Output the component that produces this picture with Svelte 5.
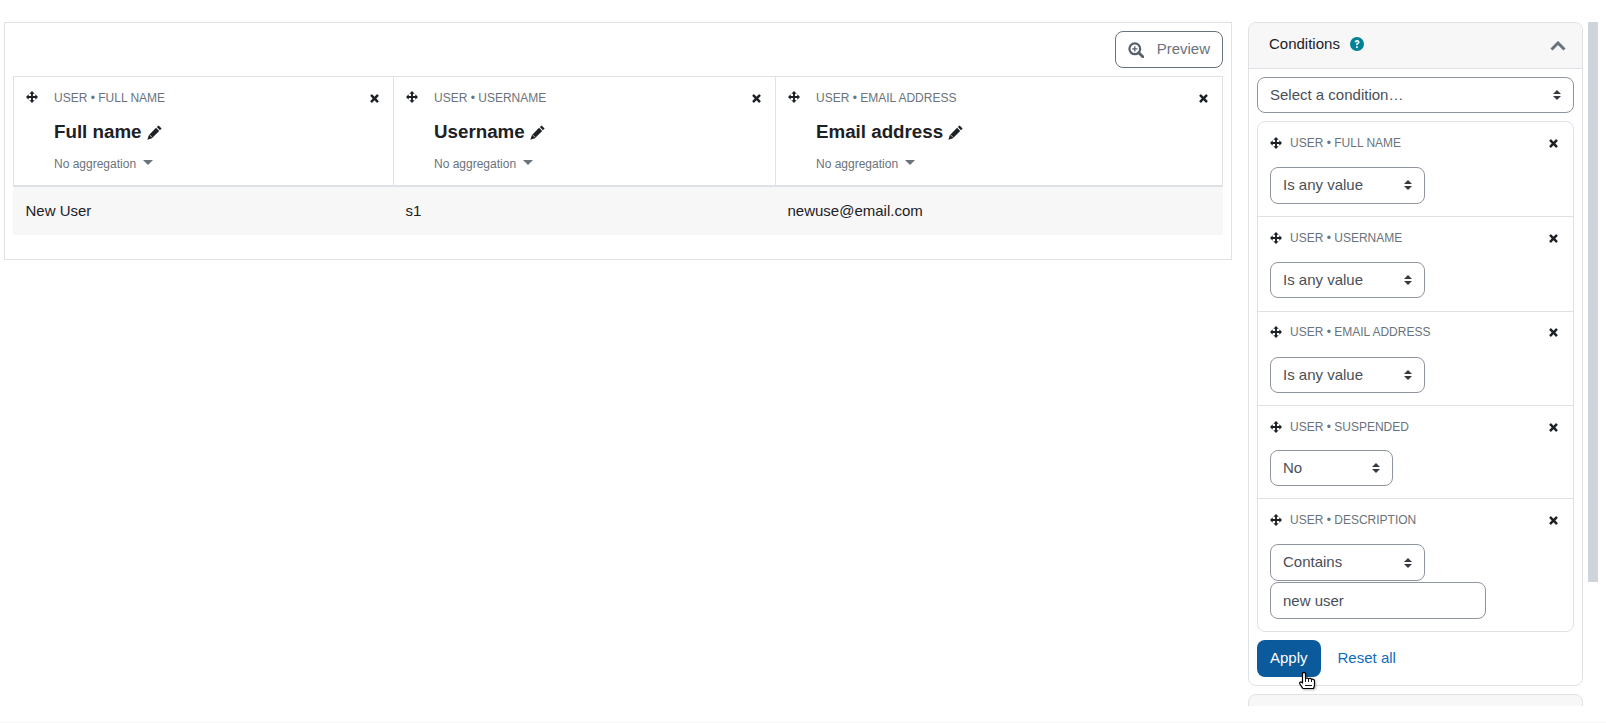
<script>
    const columns = [
        { label: "USER • FULL NAME", title: "Full name", value: "New User" },
        { label: "USER • USERNAME", title: "Username", value: "s1" },
        { label: "USER • EMAIL ADDRESS", title: "Email address", value: "newuse@email.com" }
    ];

    const conditions = [
        { label: "USER • FULL NAME", op: "Is any value" },
        { label: "USER • USERNAME", op: "Is any value" },
        { label: "USER • EMAIL ADDRESS", op: "Is any value" },
        { label: "USER • SUSPENDED", op: "No", short: true },
        { label: "USER • DESCRIPTION", op: "Contains", text: "new user" }
    ];
</script>

{#snippet move()}
    <svg class="move" viewBox="0 0 24 24" aria-hidden="true">
        <path d="M12 0l5.400 5.400h-3.500v4.700h4.700V6.600L24 12l-5.400 5.400v-3.500h-4.700v4.700h3.500L12 24l-5.400-5.400h3.500v-4.700H5.400v3.500L0 12l5.400-5.400v3.500h4.700V5.400H6.600z" />
    </svg>
{/snippet}

{#snippet close()}
    <svg class="close" viewBox="0 0 10 10" aria-hidden="true">
        <path d="M2.600.6L5 3l2.400-2.400a.8.8 0 0 1 1.100 0l.9.9a.8.8 0 0 1 0 1.100L7 5l2.400 2.400a.8.8 0 0 1 0 1.100l-.9.9a.8.8 0 0 1-1.100 0L5 7 2.600 9.400a.8.8 0 0 1-1.100 0l-.9-.9a.8.8 0 0 1 0-1.100L3 5 .6 2.600a.8.8 0 0 1 0-1.100l.9-.9a.8.8 0 0 1 1.100 0z" />
    </svg>
{/snippet}

<div class="page">
    <main class="card">
        <div class="toolbar">
            <button class="preview">
                <svg viewBox="0 0 16 16" aria-hidden="true">
                    <circle cx="6.800" cy="6.800" r="5.400" fill="none" stroke="#56606b" stroke-width="2.200" />
                    <path d="M10.800 10.800l4 4" stroke="#56606b" stroke-width="2.800" stroke-linecap="round" />
                    <path d="M6.800 4.200v5.200M4.200 6.800h5.200" stroke="#56606b" stroke-width="1.300" />
                </svg>
                <span>Preview</span>
            </button>
        </div>
        <div class="table">
            {#each columns as col}
                <div class="th">
                    {@render move()}
                    <div class="th-body">
                        <div class="th-top">
                            <span class="label">{col.label}</span>
                            {@render close()}
                        </div>
                        <h5>
                            {col.title}
                            <svg class="pencil" viewBox="0 0 16 16" aria-hidden="true">
                                <path d="M12.300.4l3.300 3.300-1.800 1.800-3.300-3.300zM9.700 3l3.300 3.300-7.800 7.800L.4 15.600l1.500-4.800z" />
                                <path d="M2.800 10.600l2.600 2.600" fill="none" stroke="#fff" stroke-width=".8" />
                            </svg>
                        </h5>
                        <div class="agg">No aggregation <i class="caret"></i></div>
                    </div>
                </div>
            {/each}
            {#each columns as col}
                <div class="td">{col.value}</div>
            {/each}
        </div>
    </main>

    <aside class="side">
        <section class="panel">
            <header>
                <span>Conditions</span>
                <svg class="help" viewBox="0 0 14 14" aria-hidden="true">
                    <circle cx="7" cy="7" r="7" fill="#008196" />
                    <path d="M4.600 5.300c.1-1.400 1.100-2.200 2.500-2.200s2.400.8 2.400 2c0 1-.6 1.400-1.200 1.800-.5.3-.7.5-.7 1v.3H6.100v-.5c0-.9.4-1.300 1-1.700.4-.3.7-.5.7-.8 0-.4-.3-.6-.7-.6-.5 0-.8.3-.9.8zM6.100 9.200h1.600v1.700H6.100z" fill="#fff" />
                </svg>
                <svg class="chevron" viewBox="0 0 16 10" aria-hidden="true">
                    <path d="M1.500 8.500L8 2l6.500 6.500" fill="none" stroke="#6a737b" stroke-width="3" />
                </svg>
            </header>
            <div class="panel-body">
                <select class="field wide">
                    <option>Select a condition…</option>
                </select>
                <div class="list">
                    {#each conditions as c}
                        <div class="cond">
                            <div class="cond-top" class:tight={c.short}>
                                {@render move()}
                                <span class="label">{c.label}</span>
                                {@render close()}
                            </div>
                            <select class="field" class:short={c.short}>
                                <option>{c.op}</option>
                            </select>
                            {#if c.text}
                                <input class="field text" value={c.text} />
                            {/if}
                        </div>
                    {/each}
                </div>
                <div class="actions">
                    <button class="apply">Apply</button>
                    <a href="#reset">Reset all</a>
                    <svg class="cursor" viewBox="0 0 16 17" aria-hidden="true">
                        <path d="M3.500 1.500C3.500.2 6.500.2 6.500 1.500V6.500C8 6 9 6 9.500 6.800 11 6.200 12 6.500 12.500 7.300 14 7 15.500 7.500 15.500 9V13C15.500 14.500 15 15 14.500 16.500H4C3 15 1.500 13 .7 11.500.2 10.300 1.500 9.500 2.500 10.200L3.500 11z" fill="#fff" stroke="#000" stroke-width="1.200" stroke-linejoin="round" />
                        <path d="M6.500 6.500V10M9.500 7V10M12.500 7.500V10M6 13.500h7" stroke="#000" stroke-width=".9" fill="none" />
                    </svg>
                </div>
            </div>
        </section>
        <section class="panel next"></section>
    </aside>

    <div class="scrollbar"></div>
</div>

<style>
    :global(body) {
        background: #fff;
        font-family: "Liberation Sans", Arial, sans-serif;
        font-size: 15px;
        line-height: 1.5;
        color: #1d2125;
    }
    .page {
        display: flex;
        align-items: flex-start;
        height: 723px;
        padding: 22.3px 0 0 4px;
        box-sizing: border-box;
        border-bottom: 1px solid #f7f7f7;
        overflow: hidden;
    }
    .card {
        width: 1228px;
        height: 238px;
        box-sizing: border-box;
        border: 1px solid #dee2e6;
        padding: 8px;
        flex: none;
    }
    .toolbar {
        display: flex;
        justify-content: flex-end;
        margin-bottom: 8px;
    }
    .preview {
        display: flex;
        align-items: center;
        gap: 13px;
        height: 36.5px;
        padding: 0 12px;
        font: inherit;
        color: #6a737b;
        background: #fff;
        border: 1px solid #6a737b;
        border-radius: 8px;
    }
    .preview svg {
        width: 16px;
        height: 16px;
    }
    .table {
        display: grid;
        grid-template-columns: 380px 382px 1fr;
        width: 1210px;
    }
    .th {
        display: flex;
        height: 111px;
        box-sizing: border-box;
        padding: 14px 14px 0 12px;
        border: 1px solid #dee2e6;
        border-bottom-width: 2px;
        border-right: 0;
    }
    .th:nth-child(3) {
        border-right: 1px solid #dee2e6;
    }
    .th .move {
        margin-right: 16px;
    }
    .th-body {
        flex: 1;
        min-width: 0;
    }
    .th-top,
    .cond-top {
        display: flex;
        align-items: center;
        justify-content: space-between;
        height: 14px;
    }
    .label {
        font-size: 12px;
        line-height: 14px;
        color: #6a737b;
    }
    .move {
        width: 12px;
        height: 12px;
        flex: none;
        fill: #1d2125;
    }
    .close {
        width: 9px;
        height: 9px;
        flex: none;
        margin-top: 1px;
        fill: #1d2125;
    }
    h5 {
        display: flex;
        align-items: center;
        gap: 5px;
        margin: 16px 0 0;
        font-size: 18.75px;
        line-height: 22.5px;
        font-weight: 700;
    }
    .pencil {
        width: 15px;
        height: 15px;
        fill: #1d2125;
    }
    .agg {
        display: flex;
        align-items: center;
        gap: 6.5px;
        margin-top: 12px;
        font-size: 12px;
        line-height: 18px;
        color: #6a737b;
    }
    .caret {
        width: 0;
        height: 0;
        margin-bottom: 3px;
        border: 5px solid transparent;
        border-top: 5px solid #6a737b;
        border-bottom: 0;
    }
    .td {
        height: 48px;
        padding: 13px 12px 0 12.5px;
        box-sizing: border-box;
        background: #f7f7f7;
        line-height: 22.5px;
    }
    .side {
        width: 335px;
        height: 683.7px;
        margin-left: 16px;
        flex: none;
        overflow: hidden;
    }
    .panel {
        border: 1px solid #dee2e6;
        border-radius: 8px;
        box-sizing: border-box;
    }
    header {
        display: flex;
        align-items: center;
        height: 45.7px;
        box-sizing: border-box;
        padding: 0 16px 3px 20px;
        background: #f7f7f7;
        border-bottom: 1px solid #dee2e6;
        border-radius: 8px 8px 0 0;
    }
    .help {
        width: 14px;
        height: 14px;
        margin-left: 10px;
    }
    .chevron {
        width: 16px;
        height: 10px;
        margin: 3px 0 0 auto;
    }
    .panel-body {
        padding: 8px;
    }
    .field {
        display: block;
        height: 36.5px;
        box-sizing: border-box;
        padding: 0 12px;
        font: inherit;
        color: #495057;
        background: #fff;
        border: 1px solid #8f959e;
        border-radius: 8px;
    }
    select.field {
        width: 155px;
        appearance: none;
        background: #fff url("data:image/svg+xml,%3Csvg xmlns='http://www.w3.org/2000/svg' viewBox='0 0 8 10'%3E%3Cpath d='M4 0l4 4H0zM4 10L0 6h8z' fill='%23343a40'/%3E%3C/svg%3E") no-repeat right 12.5px center / 8px 10px;
    }
    select.wide {
        width: 100%;
    }
    select.short {
        width: 123px;
    }
    input.text {
        width: 216px;
        margin-top: 1.5px;
    }
    .list {
        margin-top: 7.6px;
        border: 1px solid #dee2e6;
        border-radius: 8px;
    }
    .cond {
        padding: 13.8px 12px 12.3px;
        border-top: 1px solid #dee2e6;
    }
    .cond:first-child {
        border-top: 0;
    }
    .cond:last-child {
        padding-bottom: 11.7px;
    }
    .cond-top {
        margin-bottom: 17.2px;
    }
    .cond-top.tight {
        margin-bottom: 15.4px;
    }
    .cond-top .move {
        margin-right: 8px;
    }
    .cond-top .label {
        flex: 1;
    }
    .cond-top .close {
        margin-right: 3px;
    }
    .actions {
        position: relative;
        display: flex;
        align-items: center;
        gap: 17px;
        margin-top: 8.5px;
    }
    .apply {
        height: 37px;
        padding: 0 13px 1px;
        font: inherit;
        color: #fff;
        background: #0b5a9c;
        border: 0;
        border-radius: 8px;
    }
    a {
        color: #0f6cbf;
        text-decoration: none;
        margin-top: -1px;
    }
    .cursor {
        position: absolute;
        left: 42px;
        top: 32px;
        width: 16px;
        height: 17px;
        filter: drop-shadow(1px 1px 1px rgba(0, 0, 0, 0.3));
    }
    .next {
        height: 40px;
        margin-top: 8px;
        background: #f7f7f7;
    }
    .scrollbar {
        width: 10px;
        height: 560px;
        margin-left: 5px;
        flex: none;
        background: #ced4da;
    }
</style>
